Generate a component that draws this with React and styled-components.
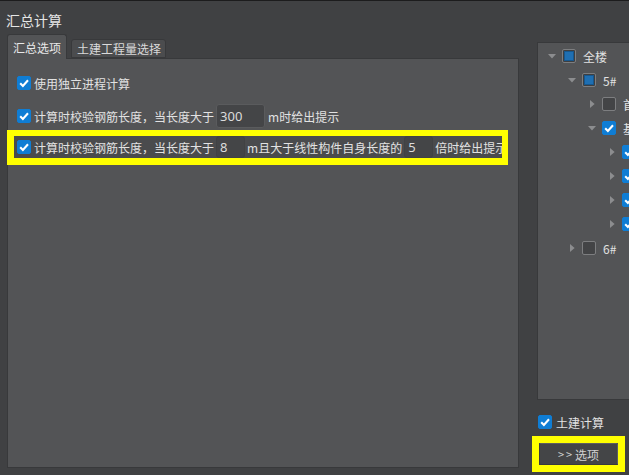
import React from "react";
import styled, { createGlobalStyle } from "styled-components";

const Global = createGlobalStyle`
  html, body { margin: 0; padding: 0; background: #404143; }
  body { font-family: "Noto Sans CJK SC", "Noto Sans", sans-serif; }
  * { box-sizing: border-box; }
`;

const Window = styled.div`
  width: 629px;
  height: 475px;
  background: #404143;
  border-top: 1px solid #1c1c1d;
  overflow: hidden;
  color: #e2e2e2;
  font-size: 12px;
`;

const Title = styled.div`
  height: 33px;
  padding: 5px 0 0 6px;
  display: flex;
  align-items: center;
  font-size: 14px;
  color: #e6e6e6;
`;

const Body = styled.div`
  display: flex;
  padding-left: 7px;
  gap: 18px;
`;

const LeftCol = styled.div`
  width: 512px;
  flex: none;
  display: flex;
  flex-direction: column;
`;

const TabBar = styled.div`
  display: flex;
  align-items: flex-end;
  height: 24px;
  gap: 4px;
  position: relative;
  z-index: 1;
`;

const Tab = styled.div`
  height: ${(p) => (p.$active ? "25px" : "19px")};
  margin-bottom: ${(p) => (p.$active ? "-1px" : "0")};
  padding: 0 5px;
  display: flex;
  align-items: center;
  white-space: nowrap;
  overflow: hidden;
  background: ${(p) => (p.$active ? "#535456" : "#4b4c4e")};
  border: 1px solid #38393b;
  border-bottom: ${(p) => (p.$active ? "none" : "1px solid #38393b")};
  border-radius: 3px 3px 0 0;
  color: ${(p) => (p.$active ? "#e8e8e8" : "#dadada")};
  font-size: 12px;
  width: ${(p) => p.$w}px;
`;

const Panel = styled.div`
  height: 410px;
  background: #535456;
  border: 1px solid #38393b;
  padding-top: 12px;
  display: flex;
  flex-direction: column;
`;

const Row = styled.div`
  display: flex;
  align-items: center;
  height: 24px;
  padding-left: 9px;
  margin-top: ${(p) => p.$mt || 0}px;
  white-space: nowrap;
`;

const Highlight = styled.div`
  width: 501px;
  margin-left: -1px;
  margin-top: 2px;
  border-style: solid;
  border-color: #ffff00;
  border-width: 6px 6px 7px 7px;
`;

const SelectedRow = styled.div`
  display: flex;
  align-items: center;
  height: 22px;
  padding-left: 3px;
  background: #4a4b4d;
  white-space: nowrap;
  overflow: hidden;
`;

const Label = styled.span`
  margin-left: ${(p) => p.$ml ?? 3}px;
  color: #e2e2e2;
  font-size: 12px;
  flex: none;
`;

const NumField = styled.div`
  flex: none;
  width: ${(p) => p.$w}px;
  height: ${(p) => p.$h}px;
  margin-left: 2px;
  padding-left: 3px;
  display: flex;
  align-items: center;
  background: #444547;
  border: 1px solid ${(p) => (p.$flat ? "#414244" : "#5a5b5d")};
  border-radius: 3px;
  color: #dcdcdc;
  font-family: "Noto Sans", sans-serif;
  font-size: 13px;
`;

const Box = styled.span`
  flex: none;
  width: 14px;
  height: 14px;
  border-radius: 2px;
  display: inline-flex;
  align-items: center;
  justify-content: center;
  margin-left: ${(p) => p.$ml || 0}px;
  background: ${(p) =>
    p.$state === "checked" ? "#0f7dd4" : p.$state === "partial" ? "#3e3f41" : "#434446"};
  border: 1px solid
    ${(p) => (p.$state === "checked" ? "#0f7dd4" : "#7d7e80")};
`;

const PartialFill = styled.span`
  width: 10px;
  height: 10px;
  background: #1f6fb2;
  border: 1px solid #17578d;
`;

const Check = ({ state = "checked", ml }) => (
  <Box $state={state} $ml={ml}>
    {state === "checked" && (
      <svg width="12" height="12" viewBox="0 0 12 12">
        <path d="M2.2 6.2 L4.9 8.9 L10 3.3" fill="none" stroke="#ffffff" strokeWidth="2.1" />
      </svg>
    )}
    {state === "partial" && <PartialFill />}
  </Box>
);

const RightCol = styled.div`
  flex: none;
  width: 120px;
  padding-top: 8px;
  display: flex;
  flex-direction: column;
`;

const TreePanel = styled.div`
  height: 358px;
  background: #535456;
  border: 1px solid #38393b;
  padding-top: 1px;
  overflow: hidden;
`;

const TreeRow = styled.div`
  display: flex;
  align-items: center;
  height: 24px;
  padding-left: ${(p) => 8 + p.$level * 20}px;
  white-space: nowrap;
`;

const ArrowSlot = styled.span`
  flex: none;
  width: 12px;
  display: inline-flex;
  justify-content: center;
  align-items: center;
`;

const TreeLabel = styled.span`
  margin-left: 7px;
  font-size: 12px;
  color: #e2e2e2;
`;

const Arrow = ({ dir }) => (
  <ArrowSlot>
    {dir === "down" ? (
      <svg width="8" height="5" viewBox="0 0 8 5">
        <polygon points="0,0 8,0 4,4.6" fill="#8c8d8f" />
      </svg>
    ) : (
      <svg width="5" height="8" viewBox="0 0 5 8">
        <polygon points="0,0 4.6,4 0,8" fill="#8c8d8f" />
      </svg>
    )}
  </ArrowSlot>
);

const BottomCheck = styled.div`
  display: flex;
  align-items: center;
  height: 14px;
  margin-top: 15px;
  padding-left: 1px;
`;

const ButtonFrame = styled.div`
  width: 93px;
  margin-top: 7px;
  margin-left: -5px;
  border: 7px solid #ffff00;
`;

const OptionButton = styled.button`
  display: flex;
  align-items: center;
  justify-content: center;
  width: 100%;
  height: 22px;
  padding: 0;
  background: #444547;
  border: 1px solid #38393b;
  border-top-color: #5d5e60;
  border-right-color: #5d5e60;
  border-radius: 2px;
  color: #d2d2d2;
  font-family: "Noto Sans CJK SC", "Noto Sans", sans-serif;
  font-size: 12px;
`;

const Arrows = styled.span`
  letter-spacing: 2px;
  font-size: 11px;
  margin-right: 1px;
`;

const tree = [
  { level: 0, arrow: "down", state: "partial", label: "全楼" },
  { level: 1, arrow: "down", state: "partial", label: "5#" },
  { level: 2, arrow: "right", state: "unchecked", label: "首层" },
  { level: 2, arrow: "down", state: "checked", label: "基础层" },
  { level: 3, arrow: "right", state: "checked", label: "第1层" },
  { level: 3, arrow: "right", state: "checked", label: "第2层" },
  { level: 3, arrow: "right", state: "checked", label: "第3层" },
  { level: 3, arrow: "right", state: "checked", label: "第4层" },
  { level: 1, arrow: "right", state: "unchecked", label: "6#" },
];

export default function App() {
  return (
    <>
      <Global />
      <Window>
        <Title>汇总计算</Title>
        <Body>
          <LeftCol>
            <TabBar>
              <Tab $active $w={60}>汇总选项</Tab>
              <Tab $w={95}>土建工程量选择</Tab>
            </TabBar>
            <Panel>
              <Row>
                <Check />
                <Label>使用独立进程计算</Label>
              </Row>
              <Row $mt={9}>
                <Check />
                <Label>计算时校验钢筋长度，当长度大于</Label>
                <NumField $w={49} $h={24}>300</NumField>
                <Label $ml={3}>m时给出提示</Label>
              </Row>
              <Highlight>
                <SelectedRow>
                  <Check />
                  <Label>计算时校验钢筋长度，当长度大于</Label>
                  <NumField $w={29} $h={22} $flat>8</NumField>
                  <Label $ml={2}>m且大于线性构件自身长度的</Label>
                  <NumField $w={29} $h={22} $flat>5</NumField>
                  <Label $ml={2}>倍时给出提示</Label>
                </SelectedRow>
              </Highlight>
            </Panel>
          </LeftCol>
          <RightCol>
            <TreePanel>
              {tree.map((n, i) => (
                <TreeRow key={i} $level={n.level}>
                  <Arrow dir={n.arrow} />
                  <Check state={n.state} ml={4} />
                  <TreeLabel>{n.label}</TreeLabel>
                </TreeRow>
              ))}
            </TreePanel>
            <BottomCheck>
              <Check />
              <Label $ml={4}>土建计算</Label>
            </BottomCheck>
            <ButtonFrame>
              <OptionButton>
                <Arrows>&gt;&gt;</Arrows>选项
              </OptionButton>
            </ButtonFrame>
          </RightCol>
        </Body>
      </Window>
    </>
  );
}
